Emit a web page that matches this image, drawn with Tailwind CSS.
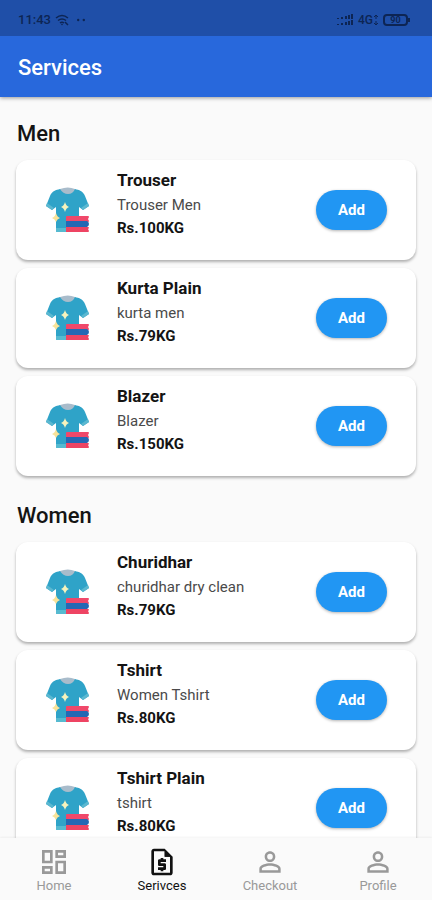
<!DOCTYPE html>
<html lang="en">
<head>
<meta charset="utf-8">
<meta name="viewport" content="width=device-width, initial-scale=1">
<title>Services</title>
<script src="https://cdn.jsdelivr.net/npm/@tailwindcss/browser@4"></script>
</head>
<body class="flex h-dvh flex-col bg-[#fafafa] font-[Roboto,sans-serif] text-[#141414]">

<svg class="hidden" aria-hidden="true">
  <symbol id="shirt" viewBox="0 0 44 46">
    <path d="M14 2C10 3 6 4 4 9L0 19l6 4 4-3v24q0 1 1 1h21q1 0 1-1V20l4 3 6-4-4-10c-2-5-6-6-10-7z" fill="#2fa3c8"/>
    <path d="M0 19l6 4 2-2-7-5zM43 19l-6 4-2-2 7-5z" fill="#5bb8d0"/>
    <path d="M10 41h10v4h-9q-1 0-1-1z" fill="#56bad0"/>
    <path d="M14 2q8-3 15 0-2 5-7 5t-8-5z" fill="#a9bccb"/>
    <path d="M19 15q1 4 4 5-3 1-4 5-1-4-4-5 3-1 4-5z" fill="#f6f3bd"/>
    <path d="M10 26q1 4 4 5-3 1-4 4-1-3-4-4 3-1 4-5z" fill="#f8e39a"/>
    <path d="M21 29h21q1 0 1 1l-1 2 1 2q0 1-1 1H21q-1 0-1-1v-4q0-1 1-1z" fill="#f0486a"/>
    <path d="M20 34h21q2 1 2 3t-2 3H20z" fill="#2468b4"/>
    <path d="M20 40h22q1 0 1 1l-1 1 1 2q0 1-1 1H20z" fill="#ee4463"/>
  </symbol>
  <symbol id="person" viewBox="0 0 24 24">
    <path d="M12 5.900a2.100 2.100 0 1 1 0 4.200 2.100 2.100 0 0 1 0-4.200m0 9c2.970 0 6.100 1.460 6.100 2.100v1.100H5.900V17c0-.64 3.130-2.100 6.100-2.100M12 4C9.790 4 8 5.790 8 8s1.790 4 4 4 4-1.790 4-4-1.790-4-4-4m0 9c-2.670 0-8 1.340-8 4v3h16v-3c0-2.660-5.330-4-8-4" fill="currentColor"/>
  </symbol>
</svg>

<header class="relative z-10 shrink-0 bg-[#2868dc] shadow-[0_1px_4px_rgba(0,0,0,0.4)]">
  <div class="flex h-9 items-center justify-between bg-[#1f4fa8] pt-1 pr-[22px] pl-[18px] text-[13px] text-[#0d2554]">
    <div class="flex items-center gap-1">
      <span class="font-medium">11:43</span>
      <svg class="h-3 w-[14px]" viewBox="0 0 14 12" fill="none" stroke="currentColor" stroke-width="1.500" aria-hidden="true">
        <path d="M1 4q6-5 12 0M3 6.500q4-3 8 0M5 9q2-1.500 4 0"/><circle cx="7" cy="10.500" r=".8" fill="currentColor" stroke="none"/><path d="M10 8l3 3"/>
      </svg>
      <svg class="ml-1 h-1 w-2" viewBox="0 0 8 4" fill="currentColor" aria-hidden="true"><circle cx="1.200" cy="2" r="1.200"/><circle cx="6.800" cy="2" r="1.200"/></svg>
    </div>
    <div class="flex items-center gap-1">
      <svg class="h-3 w-[18px]" viewBox="0 0 18 12" fill="currentColor" aria-hidden="true">
        <path d="M1 4h2v1H1zM5 3h2v2H5zM9 2h2v3H9zM12 1h2v4h-2zM15 0h2v5h-2zM1 10h2v1H1zM5 9h2v2H5zM9 8h2v3H9zM12 7h2v4h-2zM15 6h2v5h-2z"/>
      </svg>
      <span class="flex items-center text-[12px] font-medium">4G
        <svg class="h-3 w-[6px]" viewBox="0 0 6 12" fill="none" stroke="currentColor" aria-hidden="true"><path d="M3 5V1M1 3l2-2 2 2M3 7v4M1 9l2 2 2-2"/></svg>
      </span>
      <span class="flex items-center">
        <span class="flex h-3 w-[25px] items-center justify-center rounded-[4px] border-2 border-current text-[9px] leading-none font-bold">90</span>
        <span class="h-1 w-[2px] bg-current"></span>
      </span>
    </div>
  </div>
  <h1 class="px-[18px] pt-[19px] pb-[16px] text-[22px] leading-[26px] font-medium text-white">Services</h1>
</header>

<main class="min-h-0 flex-1 overflow-y-auto px-4 pt-6 pb-4 [scrollbar-width:none]">
  <section>
    <h2 class="px-px text-[22px] leading-[26px] font-medium">Men</h2>
    <ul class="mt-[13px] flex flex-col gap-2">
      <li class="flex h-[100px] items-center rounded-xl bg-white pr-[29px] pl-[30px] shadow-[0_2px_3px_rgba(0,0,0,0.3)]">
        <svg class="h-[46px] w-11 shrink-0" aria-hidden="true"><use href="#shirt"/></svg>
        <div class="ml-[27px] min-w-0 flex-1 self-start pt-2">
          <h3 class="text-[17px] leading-6 font-bold">Trouser</h3>
          <p class="text-[15px] leading-[26px] text-[#4a4a4a]">Trouser Men</p>
          <p class="text-[15px] leading-5 font-bold">Rs.100KG</p>
        </div>
        <button type="button" class="h-10 w-[71px] rounded-full bg-[#2196f3] text-[15px] font-bold text-white shadow-[0_1px_3px_rgba(0,0,0,0.3)]">Add</button>
      </li>
      <li class="flex h-[100px] items-center rounded-xl bg-white pr-[29px] pl-[30px] shadow-[0_2px_3px_rgba(0,0,0,0.3)]">
        <svg class="h-[46px] w-11 shrink-0" aria-hidden="true"><use href="#shirt"/></svg>
        <div class="ml-[27px] min-w-0 flex-1 self-start pt-2">
          <h3 class="text-[17px] leading-6 font-bold">Kurta Plain</h3>
          <p class="text-[15px] leading-[26px] text-[#4a4a4a]">kurta men</p>
          <p class="text-[15px] leading-5 font-bold">Rs.79KG</p>
        </div>
        <button type="button" class="h-10 w-[71px] rounded-full bg-[#2196f3] text-[15px] font-bold text-white shadow-[0_1px_3px_rgba(0,0,0,0.3)]">Add</button>
      </li>
      <li class="flex h-[100px] items-center rounded-xl bg-white pr-[29px] pl-[30px] shadow-[0_2px_3px_rgba(0,0,0,0.3)]">
        <svg class="h-[46px] w-11 shrink-0" aria-hidden="true"><use href="#shirt"/></svg>
        <div class="ml-[27px] min-w-0 flex-1 self-start pt-2">
          <h3 class="text-[17px] leading-6 font-bold">Blazer</h3>
          <p class="text-[15px] leading-[26px] text-[#4a4a4a]">Blazer</p>
          <p class="text-[15px] leading-5 font-bold">Rs.150KG</p>
        </div>
        <button type="button" class="h-10 w-[71px] rounded-full bg-[#2196f3] text-[15px] font-bold text-white shadow-[0_1px_3px_rgba(0,0,0,0.3)]">Add</button>
      </li>
    </ul>
  </section>

  <section class="mt-[27px]">
    <h2 class="px-px text-[22px] leading-[26px] font-medium">Women</h2>
    <ul class="mt-[13px] flex flex-col gap-2">
      <li class="flex h-[100px] items-center rounded-xl bg-white pr-[29px] pl-[30px] shadow-[0_2px_3px_rgba(0,0,0,0.3)]">
        <svg class="h-[46px] w-11 shrink-0" aria-hidden="true"><use href="#shirt"/></svg>
        <div class="ml-[27px] min-w-0 flex-1 self-start pt-2">
          <h3 class="text-[17px] leading-6 font-bold">Churidhar</h3>
          <p class="text-[15px] leading-[26px] text-[#4a4a4a]">churidhar dry clean</p>
          <p class="text-[15px] leading-5 font-bold">Rs.79KG</p>
        </div>
        <button type="button" class="h-10 w-[71px] rounded-full bg-[#2196f3] text-[15px] font-bold text-white shadow-[0_1px_3px_rgba(0,0,0,0.3)]">Add</button>
      </li>
      <li class="flex h-[100px] items-center rounded-xl bg-white pr-[29px] pl-[30px] shadow-[0_2px_3px_rgba(0,0,0,0.3)]">
        <svg class="h-[46px] w-11 shrink-0" aria-hidden="true"><use href="#shirt"/></svg>
        <div class="ml-[27px] min-w-0 flex-1 self-start pt-2">
          <h3 class="text-[17px] leading-6 font-bold">Tshirt</h3>
          <p class="text-[15px] leading-[26px] text-[#4a4a4a]">Women Tshirt</p>
          <p class="text-[15px] leading-5 font-bold">Rs.80KG</p>
        </div>
        <button type="button" class="h-10 w-[71px] rounded-full bg-[#2196f3] text-[15px] font-bold text-white shadow-[0_1px_3px_rgba(0,0,0,0.3)]">Add</button>
      </li>
      <li class="flex h-[100px] items-center rounded-xl bg-white pr-[29px] pl-[30px] shadow-[0_2px_3px_rgba(0,0,0,0.3)]">
        <svg class="h-[46px] w-11 shrink-0" aria-hidden="true"><use href="#shirt"/></svg>
        <div class="ml-[27px] min-w-0 flex-1 self-start pt-2">
          <h3 class="text-[17px] leading-6 font-bold">Tshirt Plain</h3>
          <p class="text-[15px] leading-[26px] text-[#4a4a4a]">tshirt</p>
          <p class="text-[15px] leading-5 font-bold">Rs.80KG</p>
        </div>
        <button type="button" class="h-10 w-[71px] rounded-full bg-[#2196f3] text-[15px] font-bold text-white shadow-[0_1px_3px_rgba(0,0,0,0.3)]">Add</button>
      </li>
    </ul>
  </section>
</main>

<nav class="relative z-10 grid h-[62px] shrink-0 grid-cols-4 bg-[#fafafa] text-[13px] leading-4 text-[#999999] shadow-[0_-1px_2px_rgba(0,0,0,0.05)]">
  <a href="#home" class="flex flex-col items-center pt-2">
    <svg class="size-8" viewBox="0 0 24 24" fill="currentColor" aria-hidden="true"><path d="M19 5v2h-4V5zM9 5v6H5V5zm10 8v6h-4v-6zM9 17v2H5v-2zM21 3h-8v6h8zM11 3H3v10h8zm10 8h-8v10h8zm-10 4H3v6h8z"/></svg>
    Home
  </a>
  <a href="#services" aria-current="page" class="flex flex-col items-center pt-2 text-[#111111]">
    <svg class="size-8" viewBox="0 0 24 24" fill="currentColor" aria-hidden="true"><path d="M14 2H6c-1.100 0-1.990.9-1.990 2L4 20c0 1.100.89 2 1.990 2H18c1.100 0 2-.9 2-2V8zM6 20V4h8v4h4v12zm5-1h2v-1h1c.55 0 1-.45 1-1v-3c0-.55-.45-1-1-1h-3v-1h4v-2h-2V9h-2v1h-1c-.55 0-1 .45-1 1v3c0 .55.45 1 1 1h3v1H9v2h2z"/><path d="M14 3v5h5z"/></svg>
    Serivces
  </a>
  <a href="#checkout" class="flex flex-col items-center pt-2">
    <svg class="size-8" aria-hidden="true"><use href="#person"/></svg>
    Checkout
  </a>
  <a href="#profile" class="flex flex-col items-center pt-2">
    <svg class="size-8" aria-hidden="true"><use href="#person"/></svg>
    Profile
  </a>
</nav>
</body>
</html>
